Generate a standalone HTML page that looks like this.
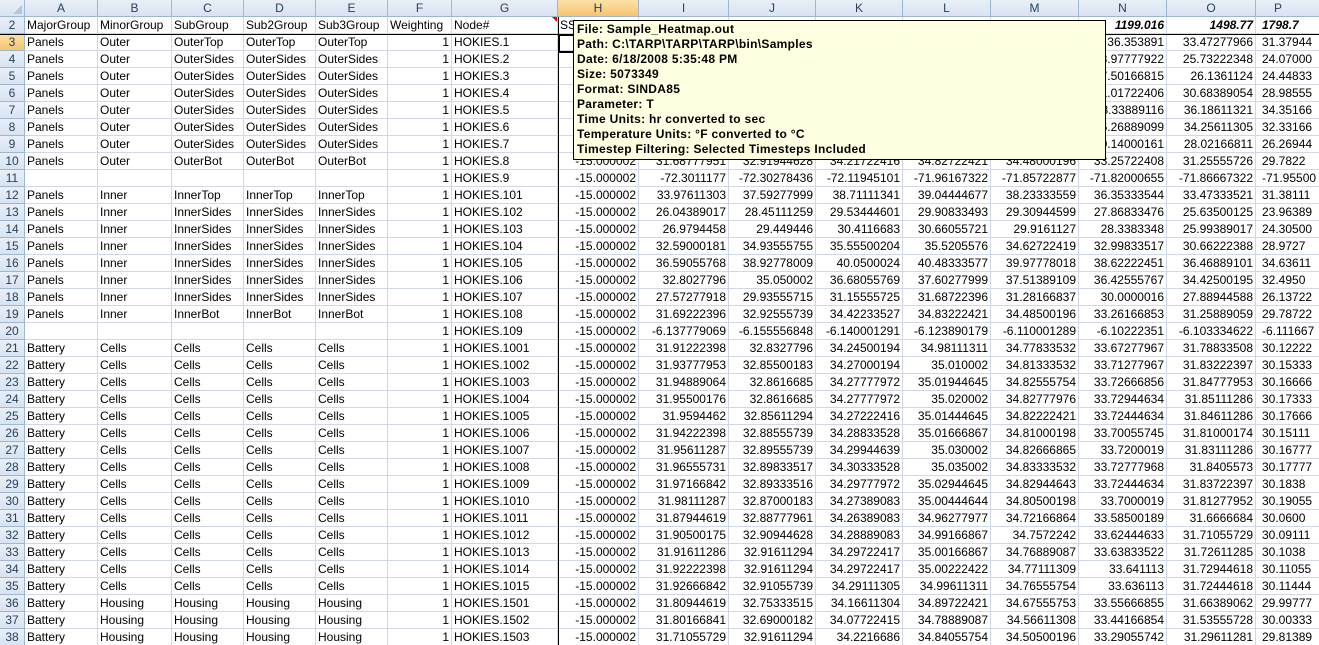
<!DOCTYPE html>
<html><head><meta charset="utf-8"><style>
html,body{margin:0;padding:0;width:1319px;height:645px;overflow:hidden;background:#fff}
body{font-family:"Liberation Sans",Arial,sans-serif;font-size:12px;position:relative}
.g{position:absolute;left:0;top:0}
.r{position:absolute;left:0;height:17px;width:1345px;white-space:nowrap}
.c{position:absolute;top:0;height:16px;line-height:17px;border-right:1px solid #d0d7e5;border-bottom:1px solid #d0d7e5;overflow:hidden;box-sizing:content-box;color:#000}
.t{padding-left:2px}
.n{text-align:right}
.n span{padding-right:2px}
.pl{text-align:left}
.pl span{padding-left:6px;padding-right:0}
.h{background:linear-gradient(#e9eff8,#d9e3f1);color:#27415f;text-align:center;border-right:1px solid #9eb6ce;border-bottom:1px solid #9eb6ce}
.hs{background:linear-gradient(#fbe2a7,#f6c46f);}
.tip{position:absolute;left:573px;top:20px;width:533px;height:140px;background:#ffffe1;border:1px solid #000;font-weight:bold;font-size:12px;line-height:15px;padding:1px 0 0 3px;box-sizing:border-box;color:#000;overflow:hidden;letter-spacing:0.3px}
</style></head><body>
<div id="g" class="g"></div>
<div style="position:absolute;left:0;top:34px;width:1319px;height:1px;background:#000"></div>
<div style="position:absolute;left:558px;top:17px;width:1px;height:628px;background:#000"></div>
<div style="position:absolute;left:558px;top:34px;width:13px;height:15px;border:2px solid #000"></div>
<div style="position:absolute;left:552px;top:17px;width:0;height:0;border-top:5px solid #e00;border-left:5px solid transparent"></div>
<div class="tip">File: Sample_Heatmap.out<br>Path: C:\TARP\TARP\TARP\bin\Samples<br>Date: 6/18/2008 5:35:48 PM<br>Size: 5073349<br>Format: SINDA85<br>Parameter: T<br>Time Units: hr converted to sec<br>Temperature Units: °F converted to °C<br>Timestep Filtering: Selected Timesteps Included</div>
<script>
(function(){
var X=[0,25,98,172,244,316,388,452,558,639,729,816,903,991,1079,1167,1256,1345];
var H=["","A","B","C","D","E","F","G","H","I","J","K","L","M","N","O","P"];
var rows=[];
rows.push(["MajorGroup","MinorGroup","SubGroup","Sub2Group","Sub3Group","Weighting","Node#","SS","","","","","","1199.016","1498.77","1798.7"]);
function L(a,b,c,d,e,n){return [a,b,c,d,e,"1",n];}
var lab=[];
lab.push(L("Panels","Outer","OuterTop","OuterTop","OuterTop","HOKIES.1"));
for(var i=2;i<=7;i++)lab.push(L("Panels","Outer","OuterSides","OuterSides","OuterSides","HOKIES."+i));
lab.push(L("Panels","Outer","OuterBot","OuterBot","OuterBot","HOKIES.8"));
lab.push(L("","","","","","HOKIES.9"));
lab.push(L("Panels","Inner","InnerTop","InnerTop","InnerTop","HOKIES.101"));
for(var i=102;i<=107;i++)lab.push(L("Panels","Inner","InnerSides","InnerSides","InnerSides","HOKIES."+i));
lab.push(L("Panels","Inner","InnerBot","InnerBot","InnerBot","HOKIES.108"));
lab.push(L("","","","","","HOKIES.109"));
for(var i=1001;i<=1015;i++)lab.push(L("Battery","Cells","Cells","Cells","Cells","HOKIES."+i));
for(var i=1501;i<=1503;i++)lab.push(L("Battery","Housing","Housing","Housing","Housing","HOKIES."+i));
var num=[
"0 0 0 0 0 36.353891 33.47277966 31.37944",
"0 0 0 0 0 28.97777922 25.73222348 24.07000",
"0 0 0 0 0 27.50166815 26.1361124 24.44833",
"0 0 0 0 0 31.01722406 30.68389054 28.98555",
"0 0 0 0 0 38.33889116 36.18611321 34.35166",
"0 0 0 0 0 36.26889099 34.25611305 32.33166",
"0 0 0 0 0 30.14000161 28.02166811 26.26944",
"31.68777951 32.91944628 34.21722416 34.82722421 34.48000196 33.25722408 31.25555726 29.7822",
"-72.3011177 -72.30278436 -72.11945101 -71.96167322 -71.85722877 -71.82000655 -71.86667322 -71.95500",
"33.97611303 37.59277999 38.71111341 39.04444677 38.23333559 36.35333544 33.47333521 31.38111",
"26.04389017 28.45111259 29.53444601 29.90833493 29.30944599 27.86833476 25.63500125 23.96389",
"26.9794458 29.449446 30.4116683 30.66055721 29.9161127 28.3383348 25.99389017 24.30500",
"32.59000181 34.93555755 35.55500204 35.5205576 34.62722419 32.99833517 30.66222388 28.9727",
"36.59055768 38.92778009 40.0500024 40.48333577 39.97778018 38.62222451 36.46889101 34.63611",
"32.8027796 35.050002 36.68055769 37.60277999 37.51389109 36.42555767 34.42500195 32.4950",
"27.57277918 29.93555715 31.15555725 31.68722396 31.28166837 30.0000016 27.88944588 26.13722",
"31.69222396 32.92555739 34.42233527 34.83222421 34.48500196 33.26166853 31.25889059 29.78722",
"-6.137779069 -6.155556848 -6.140001291 -6.123890179 -6.110001289 -6.10222351 -6.103334622 -6.111667",
"31.91222398 32.8327796 34.24500194 34.98111311 34.77833532 33.67277967 31.78833508 30.12222",
"31.93777953 32.85500183 34.27000194 35.010002 34.81333532 33.71277967 31.83222397 30.15333",
"31.94889064 32.8616685 34.27777972 35.01944645 34.82555754 33.72666856 31.84777953 30.16666",
"31.95500176 32.8616685 34.27777972 35.020002 34.82777976 33.72944634 31.85111286 30.17333",
"31.9594462 32.85611294 34.27222416 35.01444645 34.82222421 33.72444634 31.84611286 30.17666",
"31.94222398 32.88555739 34.28833528 35.01666867 34.81000198 33.70055745 31.81000174 30.15111",
"31.95611287 32.89555739 34.29944639 35.030002 34.82666865 33.7200019 31.83111286 30.16777",
"31.96555731 32.89833517 34.30333528 35.035002 34.83333532 33.72777968 31.8405573 30.17777",
"31.97166842 32.89333516 34.29777972 35.02944645 34.82944643 33.72444634 31.83722397 30.1838",
"31.98111287 32.87000183 34.27389083 35.00444644 34.80500198 33.7000019 31.81277952 30.19055",
"31.87944619 32.88777961 34.26389083 34.96277977 34.72166864 33.58500189 31.6666684 30.0600",
"31.90500175 32.90944628 34.28889083 34.99166867 34.7572242 33.62444633 31.71055729 30.09111",
"31.91611286 32.91611294 34.29722417 35.00166867 34.76889087 33.63833522 31.72611285 30.1038",
"31.92222398 32.91611294 34.29722417 35.00222422 34.77111309 33.641113 31.72944618 30.11055",
"31.92666842 32.91055739 34.29111305 34.99611311 34.76555754 33.636113 31.72444618 30.11444",
"31.80944619 32.75333515 34.16611304 34.89722421 34.67555753 33.55666855 31.66389062 29.99777",
"31.80166841 32.69000182 34.07722415 34.78889087 34.56611308 33.44166854 31.53555728 30.00333",
"31.71055729 32.91611294 34.2216686 34.84055754 34.50500196 33.29055742 31.29611281 29.81389"];
for(var k=0;k<lab.length;k++){var v=num[k].split(" ");var r=lab[k].concat(["-15.000002"]).concat(v.map(function(x){return x=="0"?"":x}));rows.push(r);}
var out="";
out+='<div class="r" style="top:0px">';
for(var j=0;j<17;j++){out+='<div class="c h'+(j==8?' hs':'')+'" style="left:'+X[j]+'px;width:'+(X[j+1]-X[j]-1)+'px">'+(j==0?'<span style="position:absolute;right:2px;bottom:2px;width:0;height:0;border-bottom:9px solid #b5c6dc;border-left:9px solid transparent"></span>':(j==16?'<span style="position:relative;left:-22px">P</span>':H[j]))+'</div>';}
out+='</div>';
for(var i=0;i<rows.length;i++){
 var rn=i+2,ty=17*(i+1),r=rows[i];
 out+='<div class="r" style="top:'+ty+'px">';
 out+='<div class="c h'+(rn==3?' hs':'')+'" style="left:0;width:24px">'+rn+'</div>';
 for(var j=1;j<17;j++){
  var txt=r[j-1]||"";
  var isNum=(j>=6&&j!=7);
  if(i==0){isNum=(j>=14);}
  var st='left:'+X[j]+'px;';
  if(i==0&&j>=14)st+='font-weight:bold;font-style:italic;';
  if(isNum) out+='<div class="c n'+(j==16?' pl':'')+'" style="'+st+'width:'+(X[j+1]-X[j]-1)+'px"><span>'+txt+'</span></div>';
  else out+='<div class="c t" style="'+st+'width:'+(X[j+1]-X[j]-3)+'px">'+txt+'</div>';
 }
 out+='</div>';
}
document.getElementById("g").innerHTML=out;
})();
</script>
</body></html>
